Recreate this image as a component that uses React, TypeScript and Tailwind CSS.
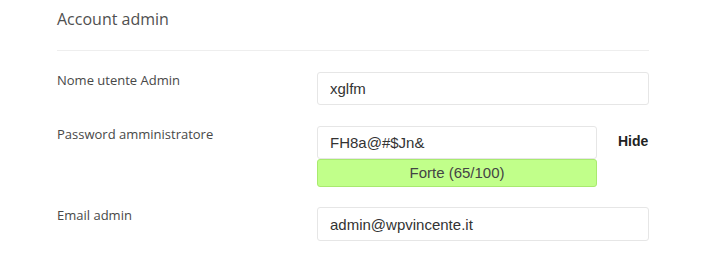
export default function App() {
  return (
    <div className="min-h-[256px] w-[708px] bg-white">
      <div className="ml-[57px] w-[592px] pt-[7px]">
        <h2 className="font-['Open_Sans',sans-serif] text-[16px] leading-[24px] text-[#505050]">Account admin</h2>
        <div className="mt-[19px] h-px bg-[#eeeeee]" />

        <div className="mt-[21px] flex">
          <label className="w-[260px] font-['Open_Sans',sans-serif] text-[13px] leading-[16px] text-[#484848]">
            Nome utente Admin
          </label>
          <input
            defaultValue="xglfm"
            className="h-[33px] w-[332px] rounded-[3px] border border-[#e6e6e6] px-[12px] font-['Liberation_Sans',Arial,sans-serif] text-[15px] text-[#333] outline-none"
          />
        </div>

        <div className="mt-[21px] flex">
          <label className="w-[260px] font-['Open_Sans',sans-serif] text-[13px] leading-[16px] text-[#484848]">
            Password amministratore
          </label>
          <div className="flex w-[280px] flex-col">
            <input
              defaultValue="FH8a@#$Jn&"
              className="h-[33px] w-full rounded-[3px] border border-[#e6e6e6] px-[12px] font-['Liberation_Sans',Arial,sans-serif] text-[15px] text-[#333] outline-none"
            />
            <div className="flex h-[28px] items-center justify-center rounded-[3px] border border-[#a9ea6f] bg-[#c1ff8a] font-['Liberation_Sans',Arial,sans-serif] text-[15px] text-[#444]">
              Forte (65/100)
            </div>
          </div>
          <button className="ml-[21px] h-[31px] font-['Liberation_Sans',Arial,sans-serif] text-[14px] font-bold text-[#222]">
            Hide
          </button>
        </div>

        <div className="mt-[20px] flex">
          <label className="w-[260px] font-['Open_Sans',sans-serif] text-[13px] leading-[16px] text-[#484848]">
            Email admin
          </label>
          <input
            defaultValue="admin@wpvincente.it"
            className="h-[34px] w-[332px] rounded-[3px] border border-[#e6e6e6] px-[12px] font-['Liberation_Sans',Arial,sans-serif] text-[15px] text-[#333] outline-none"
          />
        </div>
      </div>
    </div>
  );
}
